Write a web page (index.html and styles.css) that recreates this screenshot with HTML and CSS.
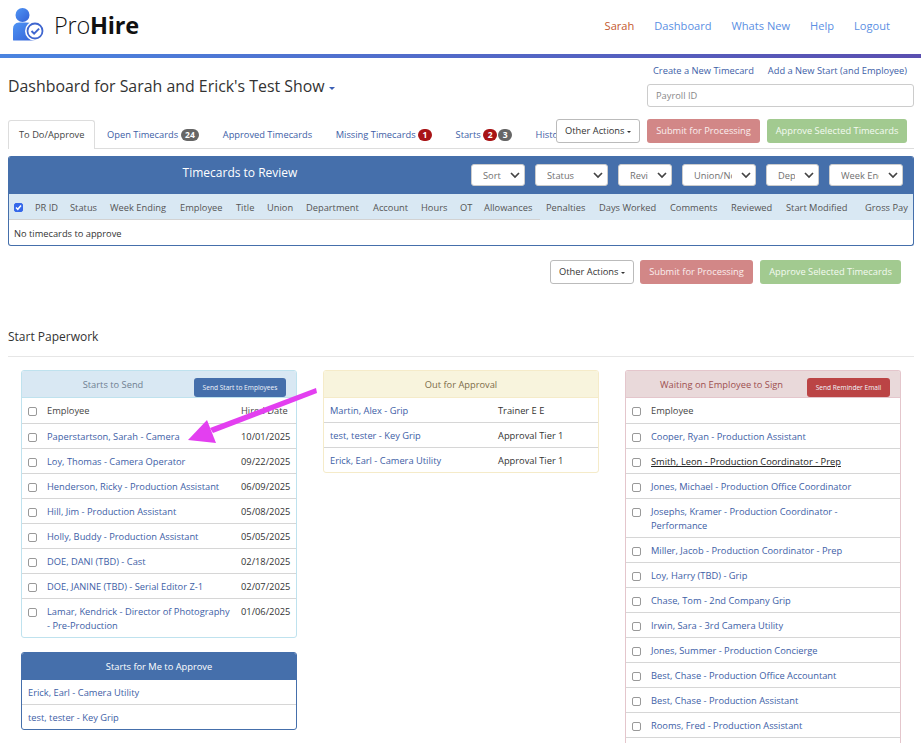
FILE: index.html
```html
<!DOCTYPE html>
<html lang="en">
<head>
<meta charset="utf-8">
<title>ProHire Dashboard</title>
<link rel="stylesheet" href="styles.css">
</head>
<body>
<header class="topbar">
  <a class="brand" href="#">
    <svg class="brand-icon" viewBox="12 9 35 34" width="35" height="34" aria-hidden="true">
      <defs>
        <linearGradient id="lg" x1="0" y1="0" x2="1" y2="1">
          <stop offset="0" stop-color="#4f95f5"/>
          <stop offset="1" stop-color="#3461d6"/>
        </linearGradient>
      </defs>
      <circle cx="22.5" cy="16" r="7" fill="url(#lg)"/>
      <path d="M13 41.5V30q0-6 6-6.500h7q7 0 9 5v13H14q-1 0-1-.5z" fill="url(#lg)"/>
      <circle cx="35" cy="32" r="10" fill="#fff"/>
      <circle cx="35" cy="32" r="7.500" fill="#fff" stroke="#3f66cf" stroke-width="1.800"/>
      <path d="M31.500 32l2.600 2.600 5-5" fill="none" stroke="#3f66cf" stroke-width="2"/>
    </svg>
    <span class="brand-name"><span class="brand-light">Pro</span><b>Hire</b></span>
  </a>
  <nav class="mainnav">
    <a class="me" href="#">Sarah</a>
    <a href="#">Dashboard</a>
    <a href="#">Whats New</a>
    <a href="#">Help</a>
    <a href="#">Logout</a>
  </nav>
</header>
<div class="rule"></div>

<main class="page">
  <section class="titlebar">
    <h1>Dashboard for Sarah and Erick's Test Show <span class="caret-title"></span></h1>
    <div class="quick">
      <div class="quick-links"><a href="#">Create a New Timecard</a><a href="#">Add a New Start (and Employee)</a></div>
      <input class="payroll" type="text" placeholder="Payroll ID">
    </div>
  </section>

  <div class="tabs">
    <a class="tab active" href="#">To Do/Approve</a>
    <a class="tab" href="#">Open Timecards <span class="badge gray wide">24</span></a>
    <a class="tab" href="#">Approved Timecards</a>
    <a class="tab" href="#">Missing Timecards <span class="badge red">1</span></a>
    <a class="tab" href="#">Starts <span class="badge red">2</span><span class="badge gray">3</span></a>
    <a class="tab" href="#">Histo</a>
    <div class="actions actions-top">
      <button class="btn btn-other">Other Actions <span class="caret"></span></button>
      <button class="btn btn-submit">Submit for Processing</button>
      <button class="btn btn-approve">Approve Selected Timecards</button>
    </div>
  </div>

  <section class="review">
    <div class="review-head">
      <h2>Timecards to Review</h2>
      <div class="filters">
        <select class="w-s"><option>Sort</option></select>
        <select class="w-status"><option>Status</option></select>
        <select class="w-s"><option>Reviewed</option></select>
        <select class="w-m"><option>Union/Non-Union</option></select>
        <select class="w-dep"><option>Department</option></select>
        <select class="w-m"><option>Week Ending</option></select>
      </div>
    </div>
    <table class="grid">
      <thead>
        <tr>
          <th class="ruled first"><input class="check" type="checkbox" checked></th>
          <th class="ruled">PR ID</th><th class="ruled">Status</th><th class="ruled">Week Ending</th>
          <th class="ruled">Employee</th><th class="ruled">Title</th><th class="ruled">Union</th>
          <th class="ruled">Department</th><th class="ruled">Account</th><th class="ruled">Hours</th>
          <th class="ruled">OT</th><th class="ruled">Allowances</th>
          <th>Penalties</th><th>Days Worked</th><th>Comments</th><th>Reviewed</th><th>Start Modified</th><th>Gross Pay</th>
        </tr>
      </thead>
      <tbody>
        <tr><td class="empty" colspan="18">No timecards to approve</td></tr>
      </tbody>
    </table>
  </section>

  <div class="actions actions-bottom">
    <button class="btn btn-other">Other Actions <span class="caret"></span></button>
    <button class="btn btn-submit">Submit for Processing</button>
    <button class="btn btn-approve">Approve Selected Timecards</button>
  </div>

  <h2 class="section-title">Start Paperwork</h2>

  <section class="boards">
    <svg class="arrow" viewBox="0 0 140 60" width="140" height="60" aria-hidden="true">
      <path d="M128 0 L22 40 L25 45 L129 5z" fill="#e33ff0"/>
      <path d="M0 52 L19 32 L28 55z" fill="#e33ff0"/>
    </svg>
    <div class="col">
      <div class="panel panel-blue">
        <div class="panel-head"><span class="panel-title">Starts to Send</span><button class="mini mini-blue">Send Start to Employees</button></div>
        <div class="row row-head"><input class="check" type="checkbox"><span class="name plain">Employee</span><span class="date plain">Hired Date</span></div>
        <div class="row"><input class="check" type="checkbox"><a class="name" href="#">Paperstartson, Sarah - Camera</a><span class="date">10/01/2025</span></div>
        <div class="row"><input class="check" type="checkbox"><a class="name" href="#">Loy, Thomas - Camera Operator</a><span class="date">09/22/2025</span></div>
        <div class="row"><input class="check" type="checkbox"><a class="name" href="#">Henderson, Ricky - Production Assistant</a><span class="date">06/09/2025</span></div>
        <div class="row"><input class="check" type="checkbox"><a class="name" href="#">Hill, Jim - Production Assistant</a><span class="date">05/08/2025</span></div>
        <div class="row"><input class="check" type="checkbox"><a class="name" href="#">Holly, Buddy - Production Assistant</a><span class="date">05/05/2025</span></div>
        <div class="row"><input class="check" type="checkbox"><a class="name" href="#">DOE, DANI (TBD) - Cast</a><span class="date">02/18/2025</span></div>
        <div class="row"><input class="check" type="checkbox"><a class="name" href="#">DOE, JANINE (TBD) - Serial Editor Z-1</a><span class="date">02/07/2025</span></div>
        <div class="row"><input class="check" type="checkbox"><a class="name" href="#">Lamar, Kendrick - Director of Photography - Pre-Production</a><span class="date">01/06/2025</span></div>
      </div>
      <div class="panel panel-solid">
        <div class="panel-head"><span class="panel-title centered">Starts for Me to Approve</span></div>
        <div class="row row-plain"><a class="name" href="#">Erick, Earl - Camera Utility</a></div>
        <div class="row row-plain"><a class="name" href="#">test, tester - Key Grip</a></div>
      </div>
    </div>

    <div class="col">
      <div class="panel panel-yellow">
        <div class="panel-head"><span class="panel-title centered">Out for Approval</span></div>
        <div class="row row-plain"><a class="name" href="#">Martin, Alex - Grip</a><span class="tier">Trainer E E</span></div>
        <div class="row row-plain"><a class="name" href="#">test, tester - Key Grip</a><span class="tier">Approval Tier 1</span></div>
        <div class="row row-plain"><a class="name" href="#">Erick, Earl - Camera Utility</a><span class="tier">Approval Tier 1</span></div>
      </div>
    </div>

    <div class="col">
      <div class="panel panel-red">
        <div class="panel-head"><span class="panel-title">Waiting on Employee to Sign</span><button class="mini mini-red">Send Reminder Email</button></div>
        <div class="row row-head"><input class="check" type="checkbox"><span class="name plain">Employee</span></div>
        <div class="row"><input class="check" type="checkbox"><a class="name" href="#">Cooper, Ryan - Production Assistant</a></div>
        <div class="row"><input class="check" type="checkbox"><a class="name hover" href="#">Smith, Leon - Production Coordinator - Prep</a></div>
        <div class="row"><input class="check" type="checkbox"><a class="name" href="#">Jones, Michael - Production Office Coordinator</a></div>
        <div class="row"><input class="check" type="checkbox"><a class="name" href="#">Josephs, Kramer - Production Coordinator - Performance</a></div>
        <div class="row"><input class="check" type="checkbox"><a class="name" href="#">Miller, Jacob - Production Coordinator - Prep</a></div>
        <div class="row"><input class="check" type="checkbox"><a class="name" href="#">Loy, Harry (TBD) - Grip</a></div>
        <div class="row"><input class="check" type="checkbox"><a class="name" href="#">Chase, Tom - 2nd Company Grip</a></div>
        <div class="row"><input class="check" type="checkbox"><a class="name" href="#">Irwin, Sara - 3rd Camera Utility</a></div>
        <div class="row"><input class="check" type="checkbox"><a class="name" href="#">Jones, Summer - Production Concierge</a></div>
        <div class="row"><input class="check" type="checkbox"><a class="name" href="#">Best, Chase - Production Office Accountant</a></div>
        <div class="row"><input class="check" type="checkbox"><a class="name" href="#">Best, Chase - Production Assistant</a></div>
        <div class="row"><input class="check" type="checkbox"><a class="name" href="#">Rooms, Fred - Production Assistant</a></div>
        <div class="row row-blank"></div>
      </div>
    </div>
  </section>
</main>
</body>
</html>
```
FILE: styles.css
```css
* { box-sizing: border-box; }
html, body { margin: 0; padding: 0; height: 743px; overflow: hidden; background: #fff; }
body { font-family: "Open Sans", "Liberation Sans", sans-serif; font-size: 9.3px; color: #444; }
a { color: #3d5ea6; text-decoration: none; }

.topbar { height: 54px; display: flex; align-items: center; justify-content: space-between; padding: 0 31px 4px 12px; }
.brand { display: flex; align-items: center; gap: 7px; color: #111; }
.brand-icon { display: block; }
.brand-name { font-size: 23.5px; line-height: 30px; letter-spacing: -.2px; }
.brand-light { font-weight: 300; }
.brand-name b { font-weight: 700; }
.mainnav { display: flex; gap: 20px; font-size: 11.1px; }
.mainnav a { color: #5b8fe3; }
.mainnav a.me { color: #c4592f; }
.rule { height: 4px; background: linear-gradient(90deg, #4a84e0, #5a4fb0); }

.page { padding: 0 7px 0 8px; }
.titlebar { display: flex; justify-content: space-between; padding-top: 6px; height: 62px; }
h1 { margin: 10px 0 0; font-size: 15.9px; line-height: 24px; font-weight: 400; color: #333; }
.caret-title { display: inline-block; width: 0; height: 0; vertical-align: 2px; border-top: 3.500px solid #3a5fb5; border-left: 3.500px solid transparent; border-right: 3.500px solid transparent; }
.quick { width: 267px; }
.quick-links { display: flex; justify-content: flex-end; gap: 14px; padding-right: 7px; line-height: 14px; white-space: nowrap; }
.payroll { display: block; width: 100%; height: 23px; margin-top: 6px; padding: 0 8px; border: 1px solid #ccc; border-radius: 3px; font: inherit; color: #444; }
.payroll::placeholder { color: #888; }

.tabs { position: relative; display: flex; height: 29px; border-bottom: 1px solid #ddd; }
.tab { display: block; margin-right: 1.500px; padding: 8px 11px 0; height: 29px; line-height: 14px; white-space: nowrap; }
.tab.active { margin-right: 1px; border: 1px solid #ddd; border-bottom: 0; border-radius: 3px 3px 0 0; background: #fff; color: #444; padding: 7px 10px 0; width: 87px; }
.badge { display: inline-block; min-width: 14px; height: 12px; padding: 0 4px; border-radius: 7px; color: #fff; font-size: 8.500px; font-weight: 700; line-height: 12px; text-align: center; }
.badge.wide { padding: 0 4.500px; }
.badge.red { background: #a81416; }
.badge.gray { background: #666; }
.badge + .badge { margin-left: 1px; }

.actions { display: flex; gap: 7px; }
.actions-top { position: absolute; top: -1px; right: 7px; background: #fff; }
.actions-bottom { justify-content: flex-end; gap: 6px; margin-top: 14px; padding-right: 13px; }
.btn { height: 23.500px; padding: 0; border: 1px solid transparent; border-radius: 3px; font: inherit; white-space: nowrap; }
.btn-other { width: 84px; background: #fff; border-color: #bbb; color: #333; }
.btn-submit { width: 113px; background: #d28787; color: #fbeeee; }
.btn-approve { width: 140px; background: #a2ca90; color: #f4faf1; }
.actions-bottom .btn-approve { width: 141px; margin-left: 1px; }
.caret { display: inline-block; width: 0; height: 0; vertical-align: 1.500px; border-top: 2.500px solid #333; border-left: 2px solid transparent; border-right: 2px solid transparent; }

.review { margin-top: 7px; border: 1px solid #456fab; border-top: 0; border-radius: 3px; overflow: hidden; height: 90px; }
.review-head { display: flex; align-items: flex-start; height: 38px; background: #456fab; }
.review-head h2 { flex: 1; margin: 8px 0 0; font-size: 12px; font-weight: 400; line-height: 17px; color: #fff; text-align: center; }
.filters { display: flex; gap: 10px; padding: 8px 10px 0 0; }
select { appearance: none; height: 22px; padding: 0 23px 0 11px; border: 1px solid #ccc; border-radius: 3px; font: inherit; color: #707070; background: #fff url("data:image/svg+xml,%3Csvg xmlns='http://www.w3.org/2000/svg' width='10' height='7'%3E%3Cpath d='M1 1l4 4 4-4' fill='none' stroke='%23444' stroke-width='1.700'/%3E%3C/svg%3E") no-repeat right 4px center; }
.w-s { width: 54px; }
.w-m { width: 74px; }
.w-status { width: 73px; }
.w-dep { width: 53px; }

.grid { width: 100%; border-collapse: collapse; table-layout: fixed; }
.grid th { height: 26px; padding: 0 0 0 6.500px; background: #d9e8f3; font-weight: 400; color: #555; white-space: nowrap; text-align: left; }
.grid th.ruled { box-shadow: inset 0 -1px 0 #d2d2d2; }
.grid th.first { padding: 0 5px; width: 19.500px; }
.grid th:nth-child(2) { width: 35px; }
.grid th:nth-child(3) { width: 40px; }
.grid th:nth-child(4) { width: 70px; }
.grid th:nth-child(5) { width: 56px; }
.grid th:nth-child(6) { width: 31px; }
.grid th:nth-child(7) { width: 39px; }
.grid th:nth-child(8) { width: 67px; }
.grid th:nth-child(9) { width: 48px; }
.grid th:nth-child(10) { width: 39px; }
.grid th:nth-child(11) { width: 24px; }
.grid th:nth-child(12) { width: 62px; }
.grid th:nth-child(13) { width: 53px; }
.grid th:nth-child(14) { width: 71px; }
.grid th:nth-child(15) { width: 61px; }
.grid th:nth-child(16) { width: 55px; }
.grid th:nth-child(17) { width: 79px; }
.grid .check { display: block; }
.grid .empty { height: 25px; padding: 1px 5px 0; color: #333; }
.check { appearance: none; flex: none; width: 9px; height: 9px; margin: 0; border: 1px solid #999; border-radius: 2px; background: #fff; }
.check:checked { border-color: #3568ea; background: #3568ea url("data:image/svg+xml,%3Csvg xmlns='http://www.w3.org/2000/svg' width='7' height='7'%3E%3Cpath d='M1 3.500l1.800 1.800L6 1.500' fill='none' stroke='%23fff' stroke-width='1.500'/%3E%3C/svg%3E") no-repeat center; }

.section-title { margin: 44.500px 0 0; padding-bottom: 10px; font-size: 12px; line-height: 18px; font-weight: 400; color: #333; border-bottom: 1px solid #e6e6e6; }

.boards { position: relative; display: grid; grid-template-columns: repeat(3, 276px); column-gap: 26px; margin-top: 13px; padding: 0 13px; align-items: start; }
.arrow { position: absolute; left: 180px; top: 18px; z-index: 2; }
.col { display: flex; flex-direction: column; gap: 14px; }
.panel { border: 1px solid; border-radius: 3px; background: #fff; overflow: hidden; }
.panel-head { display: flex; align-items: flex-start; height: 27px; border-bottom: 1px solid; }
.panel-title { flex: 1; padding-left: 10px; line-height: 27px; text-align: center; }
.panel-title.centered { padding-left: 0; }
.mini { flex: none; height: 19px; margin: 7px 10px 0 0; padding: 0; border: 1px solid transparent; border-radius: 3px; font: inherit; font-size: 6.600px; color: #f1f4fa; }
.mini-blue { width: 92px; background: #456fab; }
.mini-red { width: 83px; background: #bb4445; }
.panel-blue { border-color: #bfe2ee; }
.panel-blue .panel-head { background: #d9e8f3; border-color: #bfe2ee; color: #6f7f92; }
.panel-yellow { border-color: #f5ebc9; }
.panel-yellow .panel-head { background: #f8f4dd; border-color: #f5ebc9; color: #7d6c4a; }
.panel-red { border-color: #e4c6cc; border-bottom: 0; }
.panel-red .panel-head { background: #e9d9da; border-color: #e4c6cc; color: #9d4f50; }
.panel-solid { border-color: #456fab; }
.panel-solid .panel-head { background: #456fab; border-color: #456fab; color: #fff; }

.row { display: flex; align-items: flex-start; padding: 6px 6px 4px; line-height: 14px; border-bottom: 1px solid #d6d6d6; color: #333; }
.row:last-child { border-bottom: 0; }
.row-head { height: 26px; padding: 1px 6px 0; align-items: center; }
.row .check { margin: 3px 10px 0 0; }
.row-head .check { margin-top: 0; }
.name { flex: 1; padding-right: 7px; }
.plain { color: #444; }
.hover { color: #222; text-decoration: underline; }
.date { flex: none; width: 49px; }
.row-plain { padding: 6px 6px 4px; }
.row-plain .name { flex: none; width: 168px; }
.tier { flex: 1; }
.row-blank { height: 25px; }
.panel-solid .row-plain .name { width: auto; flex: 1; }
```
